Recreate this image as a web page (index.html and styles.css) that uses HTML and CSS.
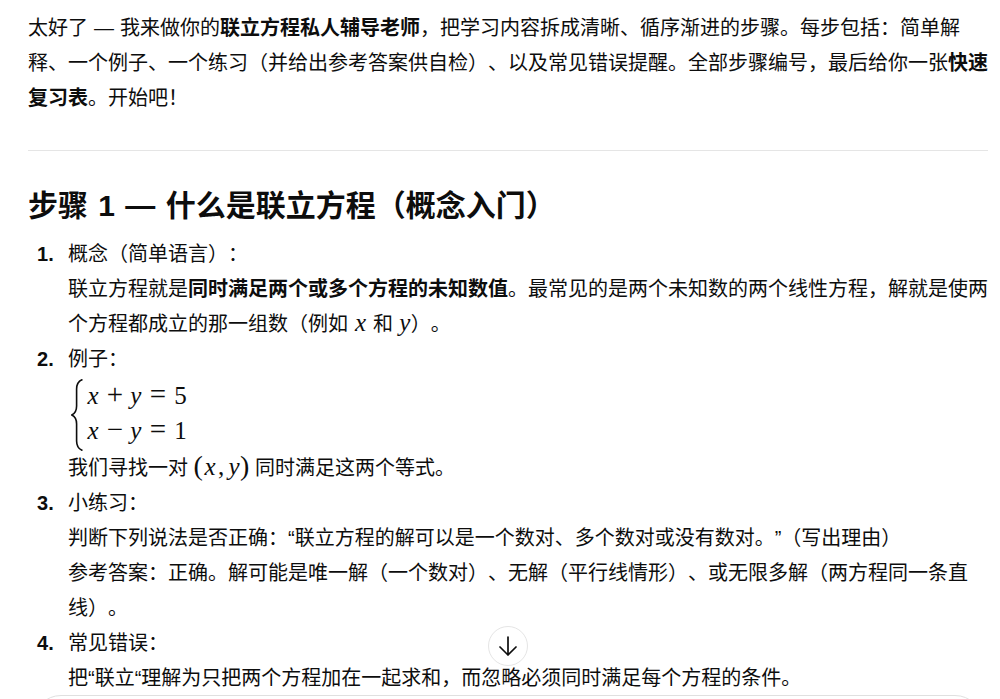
FILE: index.html
```html
<!DOCTYPE html>
<html lang="zh-CN">
<head>
<meta charset="utf-8">
<title>联立方程</title>
<link rel="stylesheet" href="styles.css">
</head>
<body>
<main class="thread">
  <p class="intro">太好了 — 我来做你的<strong>联立方程私人辅导老师</strong>，把学习内容拆成清晰、循序渐进的步骤。每步包括：简单解释、一个例子、一个练习（并给出参考答案供自检）、以及常见错误提醒。全部步骤编号，最后给你一张<strong>快速复习表</strong>。开始吧！</p>
  <hr class="rule">
  <h2 class="step-title">步骤 1 — 什么是联立方程（概念入门）</h2>
  <ol class="steps">
    <li>概念（简单语言）：<br>联立方程就是<strong>同时满足两个或多个方程的未知数值</strong>。最常见的是两个未知数的两个线性方程，解就是使两个方程都成立的那一组数（例如 <span class="mi x">x</span> 和 <span class="mi y">y</span>）。</li>
    <li>例子：
      <div class="system">
        <svg class="brace" viewBox="0 0 12 72" width="12" height="72" aria-hidden="true"><path d="M11.5 0.5C7.5 2 5.6 5 5.6 10V27C5.6 31.5 4 34.5 0.8 36C4 37.5 5.6 40.5 5.6 45V62C5.6 67 7.5 70 11.5 71.5" fill="none" stroke="#0d0d0d" stroke-width="1.6"/></svg>
        <div class="system-lines">
          <div class="eq"><span class="mi x">x</span><span class="mo bin">+</span><span class="mi y">y</span><span class="mo rel">=</span><span class="mn">5</span></div>
          <div class="eq"><span class="mi x">x</span><span class="mo bin">−</span><span class="mi y">y</span><span class="mo rel">=</span><span class="mn">1</span></div>
        </div>
      </div>
      我们寻找一对 <span class="math-inline"><span class="paren">(</span><span class="mi x">x</span><span class="comma">,</span><span class="mi y">y</span><span class="paren">)</span></span> 同时满足这两个等式。</li>
    <li>小练习：<br>判断下列说法是否正确：“联立方程的解可以是一个数对、多个数对或没有数对。”（写出理由）<br>参考答案：正确。解可能是唯一解（一个数对）、无解（平行线情形）、或无限多解（两方程同一条直线）。</li>
    <li>常见错误：<br>把“联立“理解为只把两个方程加在一起求和，而忽略必须同时满足每个方程的条件。</li>
  </ol>
</main>
<button class="scroll-down" type="button" aria-label="滚动到底部">
  <svg viewBox="0 0 20 20" width="20" height="20" aria-hidden="true"><path d="M10 1V19M2 11L10 19L18 11" fill="none" stroke="#0d0d0d" stroke-width="1.7" stroke-linecap="round" stroke-linejoin="round"/></svg>
</button>
<div class="composer"></div>
</body>
</html>
```
FILE: styles.css
```css
* { box-sizing: border-box; }
html, body { height: 699px; overflow: hidden; }
body {
  margin: 0;
  background: #fff;
  color: #0d0d0d;
  font-family: "Liberation Sans", "Noto Sans CJK SC", sans-serif;
  font-size: 20px;
  line-height: 35px;
  position: relative;
  text-spacing-trim: space-all;
  font-kerning: none;
}
.thread { padding: 11px 12px 0 28px; }
.intro { margin: 0; word-spacing: 0.4px; }
strong { font-weight: 700; }
.rule { border: 0; border-top: 1px solid #e5e5e5; margin: 34px 0 0; }
.step-title {
  margin: 30px 0 0;
  font-size: 30px;
  line-height: 50px;
  font-weight: 700;
  word-spacing: 2px;
}
.steps { margin: 6px 0 0; padding: 0 0 0 31px; list-style: none; counter-reset: step; }
.steps li { counter-increment: step; padding-left: 9px; }
.steps li::before {
  content: counter(step) ".";
  display: inline-block;
  width: 31px;
  margin-left: -31px;
  font-weight: 700;
}
.mi, .mo, .mn, .comma, .paren {
  display: inline-block;
  font-family: "Liberation Serif", serif;
  font-size: 25px;
  line-height: 24px;
  text-align: center;
}
.mi { font-style: italic; }
.x { width: 14px; }
.y { width: 12px; }
.mo { font-size: 29px; width: 19px; }
.bin { margin: 0 5.4px; }
.rel { margin: 0 6.7px; }
.mn { width: 12px; }
.comma { width: 11px; text-align: left; padding-left: 1px; }
.paren { width: 9.4px; font-size: 28px; }
.system { display: flex; align-items: center; height: 74px; gap: 3px; margin-left: 3px; padding-top: 1px; }
.eq { height: 35px; white-space: nowrap; }
.scroll-down {
  position: absolute;
  left: 488px;
  top: 626px;
  width: 40px;
  height: 40px;
  padding: 0;
  display: flex;
  align-items: center;
  justify-content: center;
  background: #fff;
  border: 1px solid #e5e5e5;
  border-radius: 50%;
}
.composer {
  position: absolute;
  left: 33px;
  right: 17px;
  top: 695px;
  height: 60px;
  background: #fff;
  border: 1px solid #e0e0e0;
  border-radius: 28px;
}
```
